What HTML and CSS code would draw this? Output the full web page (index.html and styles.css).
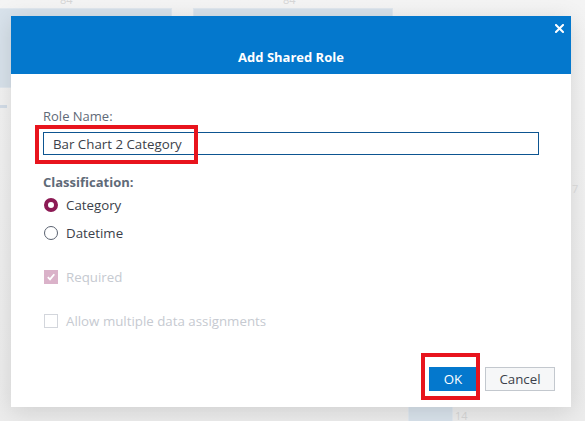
FILE: index.html
```html
<!DOCTYPE html>
<html>
<head>
<meta charset="utf-8">
<link rel="stylesheet" href="styles.css">
</head>
<body>
<div class="backdrop">
  <div class="bg-tick t1">84</div>
  <div class="bg-tick t2">84</div>
  <div class="bg-bar b1"></div>
  <div class="bg-bar b2"></div>
  <div class="bg-bar b3"></div>
  <div class="bg-dash"></div>
  <div class="bg-tick t3">7</div>
  <div class="bg-tick t4">14</div>
</div>
<div class="dialog">
  <div class="dlg-header">
    <button class="close" aria-label="Close">
      <svg width="9" height="9" viewBox="0 0 9 9"><path d="M1 1 L8 8 M8 1 L1 8" stroke="#fff" stroke-width="2" stroke-linecap="square"/></svg>
    </button>
    <div class="title">Add Shared Role</div>
  </div>
  <div class="dlg-body">
    <label class="field-label">Role Name:</label>
    <div class="input-wrap">
      <input class="text-input" type="text" value="Bar Chart 2 Category">
      <div class="mark mark-input"></div>
    </div>
    <div class="section-label">Classification:</div>
    <div class="opt-row">
      <span class="radio on"></span><span class="opt-text">Category</span>
    </div>
    <div class="opt-row">
      <span class="radio"></span><span class="opt-text">Datetime</span>
    </div>
    <div class="opt-row check-row disabled">
      <span class="check on">
        <svg width="10" height="10" viewBox="0 0 10 10"><path d="M1.8 5.2 L4 7.4 L8.3 2.2" fill="none" stroke="#fff" stroke-width="1.8"/></svg>
      </span><span class="opt-text">Required</span>
    </div>
    <div class="opt-row check-row disabled">
      <span class="check"></span><span class="opt-text">Allow multiple data assignments</span>
    </div>
  </div>
  <div class="dlg-footer">
    <div class="ok-wrap">
      <button class="btn btn-primary">OK</button>
      <div class="mark mark-ok"></div>
    </div>
    <button class="btn btn-secondary">Cancel</button>
  </div>
</div>
</body>
</html>
```

FILE: styles.css
```css
* { box-sizing: border-box; }
html, body { margin: 0; padding: 0; }
body {
  width: 585px;
  height: 421px;
  overflow: hidden;
  position: relative;
  background: #efefef;
  font-family: "Open Sans", "Liberation Sans", sans-serif;
}
.backdrop {
  position: absolute;
  inset: 0;
  background: linear-gradient(#f4f4f4, #ececec);
}
.bg-tick {
  position: absolute;
  font-size: 11px;
  color: #d6d6d6;
  line-height: 12px;
}
.t1 { left: 60px; top: -6px; }
.t2 { left: 283px; top: -6px; }
.t3 { left: 572px; top: 183px; color: #dcdcdc; }
.t4 { left: 455px; top: 410px; }
.bg-bar {
  position: absolute;
  background: #d8e2eb;
  border: 1px solid #e1e8ef;
}
.b1 { left: -2px; top: 8px; width: 174px; height: 80px; }
.b2 { left: 193px; top: 8px; width: 200px; height: 80px; }
.b3 { left: 408px; top: 380px; width: 45px; height: 60px; }
.bg-dash {
  position: absolute;
  left: 0;
  top: 105px;
  width: 6px;
  height: 3px;
  border-top: 3px dotted #d3dde8;
}

.dialog {
  position: absolute;
  left: 11px;
  top: 16px;
  width: 560px;
  height: 391px;
  background: #fff;
  box-shadow: 0 4px 22px rgba(0,0,0,0.13);
  display: flex;
  flex-direction: column;
}
.dlg-header {
  height: 58px;
  background: #0478cd;
  display: flex;
  flex-direction: column;
}
.close {
  align-self: flex-end;
  width: 12px;
  height: 12px;
  margin: 6px 6px 0 0;
  padding: 0;
  border: 0;
  background: transparent;
  display: flex;
  align-items: center;
  justify-content: center;
}
.title {
  margin-top: 14px;
  text-align: center;
  color: #fff;
  font-weight: 700;
  font-size: 13px;
  line-height: 18px;
}
.dlg-body {
  flex: 1;
  padding: 33px 32px 0 32px;
  display: flex;
  flex-direction: column;
}
.field-label {
  font-size: 13px;
  line-height: 18px;
  color: #5f6a78;
}
.input-wrap {
  position: relative;
  margin-top: 7px;
}
.text-input {
  display: block;
  width: 100%;
  height: 23px;
  border: 1px solid #0d5591;
  border-radius: 0;
  padding: 0 9px;
  font-family: inherit;
  font-size: 13.3px;
  color: #3b3f4a;
  outline: none;
}
.mark {
  position: absolute;
  border: 4px solid #e8141d;
  pointer-events: none;
}
.mark-input { left: -8px; top: -7px; width: 163px; height: 39px; }
.section-label {
  margin-top: 18px;
  font-size: 13px;
  line-height: 18px;
  font-weight: 700;
  color: #5f6a78;
}
.opt-row {
  height: 28px;
  display: flex;
  align-items: center;
  gap: 8px;
  padding-left: 1px;
}
.opt-text {
  font-size: 13.3px;
  color: #3b3f4a;
}
.radio {
  width: 14px;
  height: 14px;
  border-radius: 50%;
  border: 1px solid #5a6270;
  background: #fff;
}
.radio.on {
  border: 4px solid #8c1a54;
}
.check-row { margin-top: 16px; }
.check-row + .check-row { margin-top: 16px; }
.check {
  width: 14px;
  height: 14px;
  border: 1px solid #d3d6dc;
  background: #fff;
  display: flex;
  align-items: center;
  justify-content: center;
}
.check.on {
  border: 0;
  background: #dab2c9;
}
.disabled .opt-text { color: #c6cad1; }
.dlg-footer {
  display: flex;
  justify-content: flex-end;
  gap: 8px;
  padding: 0 16px 16px 0;
}
.ok-wrap { position: relative; }
.btn {
  height: 24px;
  font-family: inherit;
  font-size: 13.3px;
  padding: 0;
  border-radius: 0;
}
.btn-primary {
  width: 48px;
  background: #0478cd;
  color: #fff;
  border: 0;
}
.btn-secondary {
  width: 70px;
  background: #f6f7f8;
  color: #3b3f4a;
  border: 1px solid #c3c8ce;
}
.mark-ok { left: -8px; top: -14px; width: 59px; height: 47px; }
```
